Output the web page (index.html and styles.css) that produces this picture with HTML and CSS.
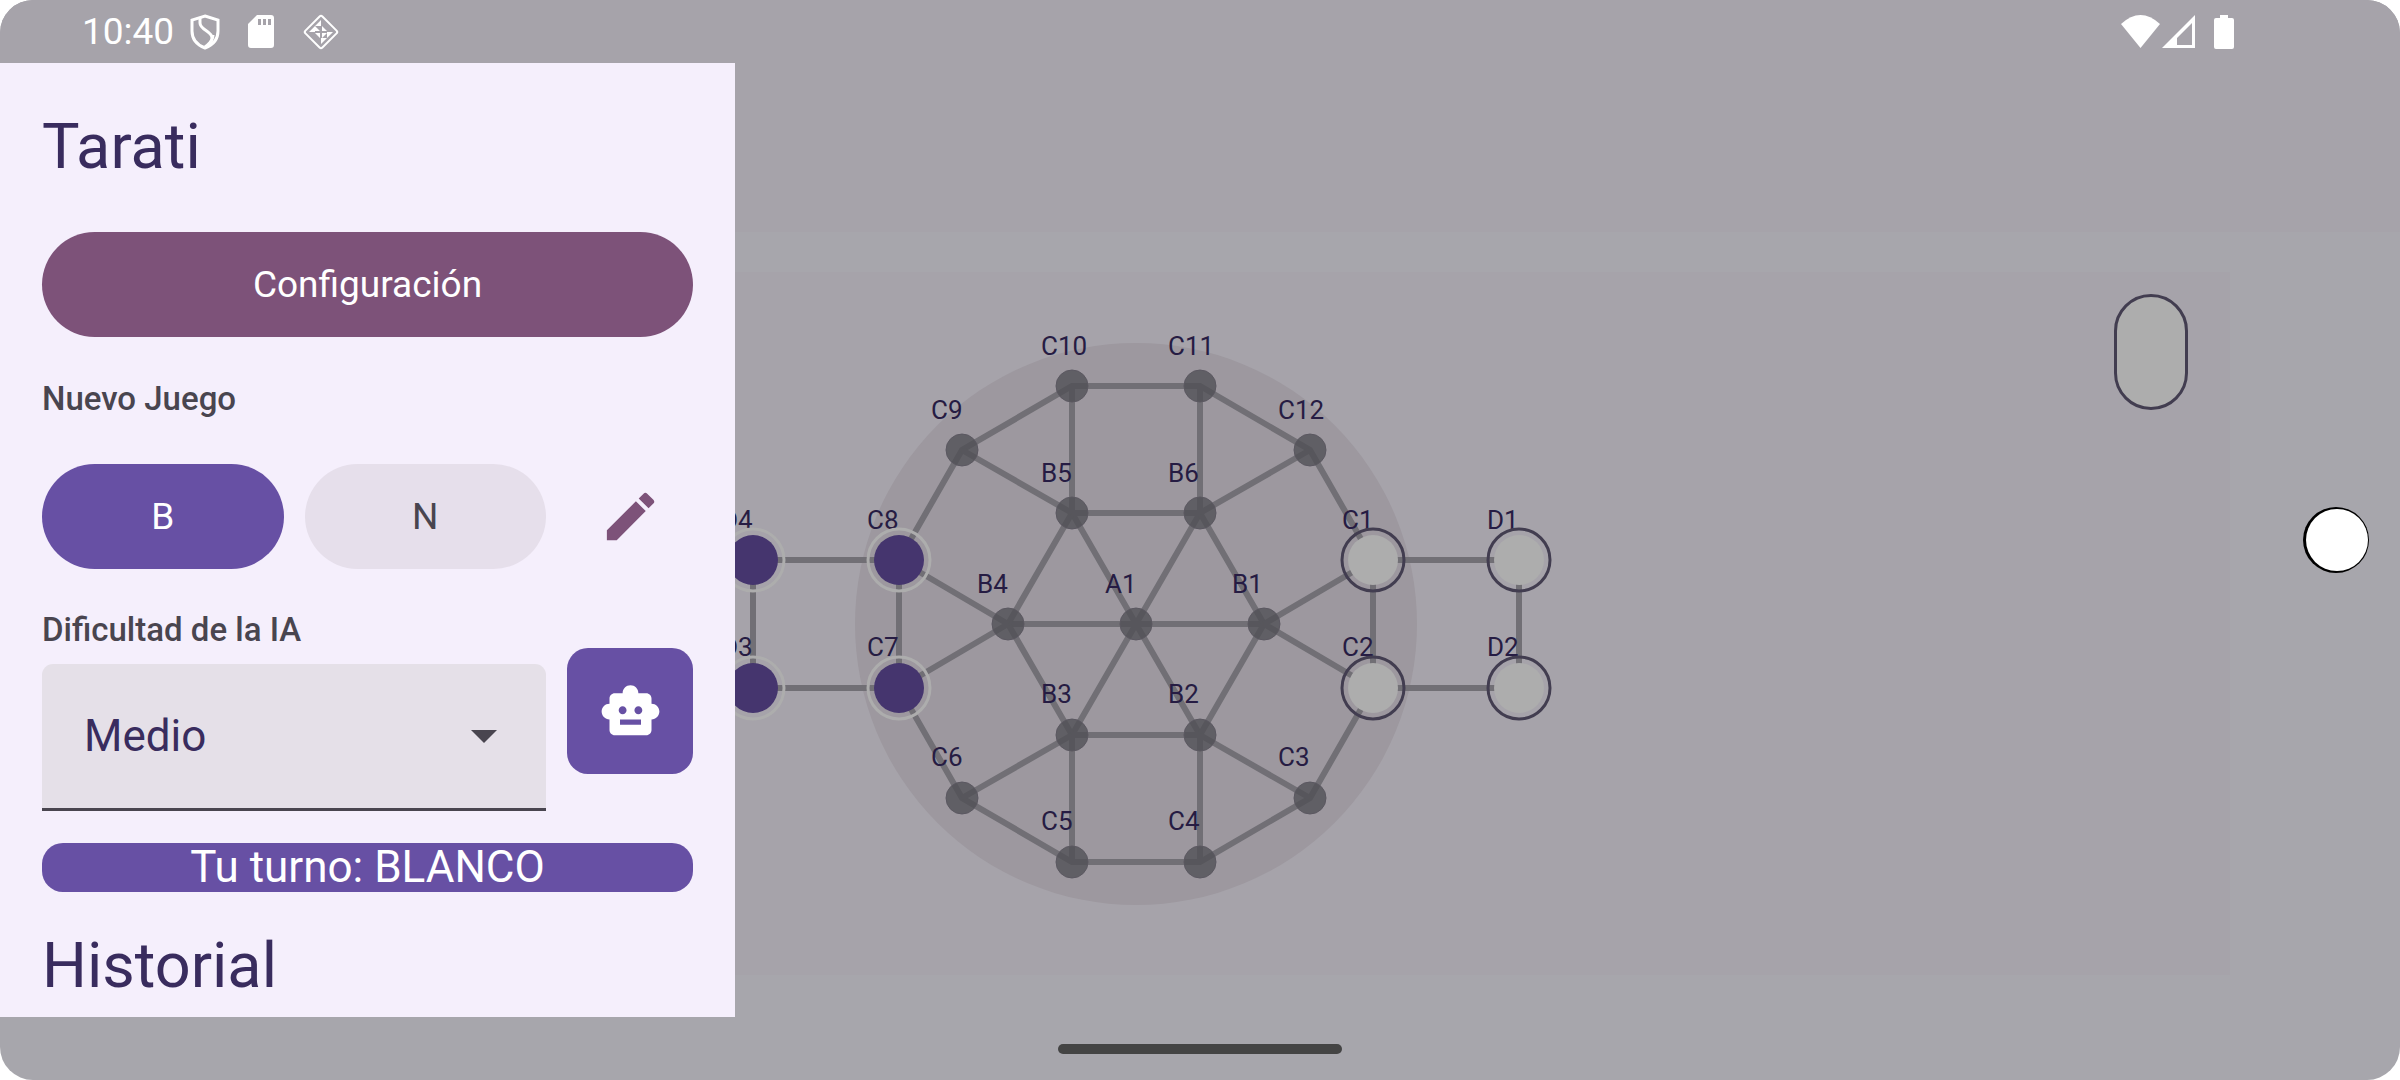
FILE: index.html
```html
<!DOCTYPE html>
<html lang="es">
<head>
<meta charset="utf-8">
<meta name="viewport" content="width=device-width, initial-scale=1">
<title>Tarati</title>
<link rel="stylesheet" href="styles.css">
</head>
<body>
<div class="screen">
  <header class="status-bar">
    <time class="clock">10:40</time>
    <div class="notifications">
      <svg width="30" height="36" viewBox="0 0 30 36" fill="none" stroke="#fff" stroke-width="3">
        <path d="M15 2 28 6V17C28 25 23 31 15 34 7 31 2 25 2 17V6Z"/>
        <path d="M10 4V9C10 16 22 17 22 24 22 27 19 30 15 33M23 21C23 26 21 29 16 33"/>
      </svg>
      <svg width="26" height="34" viewBox="0 0 26 34" fill="#fff">
        <path fill-rule="evenodd" d="M9 0H23Q26 0 26 3V30Q26 33 23 33H3Q0 33 0 30V9ZM10 4V10H13V4ZM15 4V10H18V4ZM20 4V10H23V4Z"/>
      </svg>
      <svg width="38" height="38" viewBox="0 0 38 38" fill="#fff">
        <rect x="7" y="7" width="24" height="24" rx="2" transform="rotate(45 19 19)" fill="none" stroke="#fff" stroke-width="2"/>
        <path d="M19 7V13H13ZM7 19H13V13ZM31 19H25V25ZM19 31V25H25ZM13 13 18 18H13ZM20 13 25 18H20ZM13 20H18V25ZM20 20H25L20 25Z"/>
      </svg>
    </div>
    <div class="system-icons">
      <svg width="39" height="34" viewBox="0 0 39 34" fill="#fff"><path d="M0 9Q19.500-9 39 9L19.500 33Z"/></svg>
      <svg width="33" height="34" viewBox="0 0 33 34" fill="#fff"><path fill-rule="evenodd" d="M33 0V33H0ZM30 8 15 23V30H30Z"/></svg>
      <svg class="battery" width="20" height="34" viewBox="0 0 20 34" fill="#fff"><path d="M6 0H14V3H18Q20 3 20 5V32Q20 34 18 34H2Q0 34 0 32V5Q0 3 2 3H6Z"/></svg>
    </div>
  </header>

  <main class="stage">
    <aside class="drawer">
      <h1 class="title">Tarati</h1>
      <button class="pill pill-settings" type="button">Configuración</button>
      <h2 class="caption">Nuevo Juego</h2>
      <div class="new-game">
        <button class="pill pill-active" type="button">B</button>
        <button class="pill pill-idle" type="button">N</button>
        <button class="edit" type="button" aria-label="Editar">
          <svg width="63" height="63" viewBox="0 0 24 24" fill="#7d5279"><path d="M3 17.25V21h3.75L17.81 9.94l-3.75-3.75zM20.71 7.04a1 1 0 0 0 0-1.41l-2.34-2.34a1 1 0 0 0-1.41 0l-1.83 1.83 3.75 3.75z"/></svg>
        </button>
      </div>
      <div class="ai-row">
        <div class="field">
          <label class="caption" for="level">Dificultad de la IA</label>
          <div class="select-box">
            <select id="level"><option>Fácil</option><option selected>Medio</option><option>Difícil</option></select>
            <svg class="arrow" width="26" height="13" viewBox="0 0 26 13" fill="#49454f"><path d="M0 0H26L13 13Z"/></svg>
          </div>
        </div>
        <button class="robot" type="button" aria-label="IA">
          <svg width="63" height="63" viewBox="0 0 24 24" fill="#fff"><path d="M20 9V7c0-1.100-.9-2-2-2h-3c0-1.660-1.340-3-3-3S9 3.340 9 5H6c-1.100 0-2 .9-2 2v2c-1.660 0-3 1.340-3 3s1.340 3 3 3v4c0 1.100.9 2 2 2h12c1.100 0 2-.9 2-2v-4c1.660 0 3-1.340 3-3s-1.340-3-3-3zM7.500 11.500c0-.83.67-1.500 1.500-1.500s1.500.67 1.500 1.500S9.830 13 9 13s-1.500-.67-1.500-1.500zM16 17H8v-2h8v2zm-1-4c-.83 0-1.500-.67-1.500-1.500S14.170 10 15 10s1.500.67 1.500 1.500S15.830 13 15 13z"/></svg>
        </button>
      </div>
      <p class="turn">Tu turno: BLANCO</p>
      <h2 class="title">Historial</h2>
    </aside>

    <section class="board">
      <svg class="board-map" width="840" height="582" viewBox="720 333 840 582">
        <circle class="disc" cx="1136" cy="624" r="281"/>
        <path class="edges" d="M1136 624 1264 624M1136 624 1200 735M1136 624 1072 735M1136 624 1008 624M1136 624 1072 513M1136 624 1200 513"/>
        <path class="edges" d="M1264 624 1200 735 1072 735 1008 624 1072 513 1200 513Z"/>
        <path class="edges" d="M1373 560V688L1310 798 1200 862H1072L962 798 899 688V560L962 450 1072 386H1200L1310 450Z"/>
        <path class="edges" d="M1264 624 1373 560M1264 624 1373 688M1200 735 1310 798M1200 735V862M1072 735V862M1072 735 962 798M1008 624 899 688M1008 624 899 560M1072 513 962 450M1072 513V386M1200 513V386M1200 513 1310 450"/>
        <path class="edges" d="M1373 560H1519V688H1373M899 560H753V688H899"/>
        <g class="nodes">
          <circle cx="1136" cy="624" r="16"/><circle cx="1264" cy="624" r="16"/><circle cx="1200" cy="735" r="16"/><circle cx="1072" cy="735" r="16"/><circle cx="1008" cy="624" r="16"/><circle cx="1072" cy="513" r="16"/><circle cx="1200" cy="513" r="16"/>
          <circle cx="1310" cy="798" r="16"/><circle cx="1200" cy="862" r="16"/><circle cx="1072" cy="862" r="16"/><circle cx="962" cy="798" r="16"/><circle cx="962" cy="450" r="16"/><circle cx="1072" cy="386" r="16"/><circle cx="1200" cy="386" r="16"/><circle cx="1310" cy="450" r="16"/>
        </g>
        <g class="labels">
          <text x="1105" y="593">A1</text><text x="1232" y="593">B1</text><text x="1168" y="703">B2</text><text x="1041" y="703">B3</text><text x="977" y="593">B4</text><text x="1041" y="482">B5</text><text x="1168" y="482">B6</text>
          <text x="1342" y="529">C1</text><text x="1342" y="656">C2</text><text x="1278" y="766">C3</text><text x="1168" y="830">C4</text><text x="1041" y="830">C5</text><text x="931" y="766">C6</text><text x="867" y="656">C7</text><text x="867" y="529">C8</text><text x="931" y="419">C9</text><text x="1041" y="355">C10</text><text x="1168" y="355">C11</text><text x="1278" y="419">C12</text>
          <text x="1487" y="529">D1</text><text x="1487" y="656">D2</text><text x="721" y="656">D3</text><text x="721" y="529">D4</text>
        </g>
        <g class="white-piece">
          <circle cx="1373" cy="560" r="25"/><circle cx="1373" cy="688" r="25"/><circle cx="1519" cy="560" r="25"/><circle cx="1519" cy="688" r="25"/>
        </g>
        <g class="white-ring">
          <circle cx="1373" cy="560" r="31"/><circle cx="1373" cy="688" r="31"/><circle cx="1519" cy="560" r="31"/><circle cx="1519" cy="688" r="31"/>
        </g>
        <g class="black-piece">
          <circle cx="899" cy="560" r="25"/><circle cx="899" cy="688" r="25"/><circle cx="753" cy="560" r="25"/><circle cx="753" cy="688" r="25"/>
        </g>
        <g class="black-ring">
          <circle cx="899" cy="560" r="31"/><circle cx="899" cy="688" r="31"/><circle cx="753" cy="560" r="31"/><circle cx="753" cy="688" r="31"/>
        </g>
      </svg>
      <div class="turn-indicator"></div>
    </section>

    <div class="camera">
      <svg width="66" height="66" viewBox="0 0 66 66"><circle cx="33" cy="33" r="33"/><circle cx="34" cy="33" r="31" fill="#fff"/></svg>
    </div>
  </main>

  <footer class="nav-bar"><div class="handle"></div></footer>
</div>
</body>
</html>
```
FILE: styles.css
```css
* {
  box-sizing: border-box;
}

body {
  margin: 0;
  background: #fff;
  font-family: Roboto, "Noto Sans", sans-serif;
}

h1, h2, p {
  margin: 0;
  font-weight: 400;
}

button, select {
  border: 0;
  padding: 0;
  font: inherit;
  cursor: pointer;
}

svg {
  display: block;
}

.screen {
  display: flex;
  flex-direction: column;
  min-height: 100vh;
  border-radius: 33px;
  overflow: hidden;
  background: #a7a6ac;
}

.status-bar {
  display: flex;
  align-items: center;
  height: 63px;
  padding: 0 166px 0 82px;
  background: #a6a3aa;
  color: #fff;
}

.clock {
  font-size: 37px;
  line-height: 44px;
}

.notifications {
  display: flex;
  align-items: center;
  gap: 28px;
  margin-left: 16px;
}

.system-icons {
  display: flex;
  align-items: center;
  gap: 2px;
  margin-left: auto;
}

.battery {
  margin-left: 17px;
}

.stage {
  display: flex;
  flex: 1;
  background: linear-gradient(#a6a3aa 169px, #a7a6ac 169px);
}

.drawer {
  flex: none;
  width: 735px;
  padding: 42px 42px 8px;
  background: #f5effc;
  color: #392c5e;
  z-index: 1;
}

.title {
  font-size: 63px;
  line-height: 84px;
}

.pill {
  height: 105px;
  border-radius: 53px;
  font-size: 37px;
  line-height: 53px;
}

.pill-settings {
  width: 100%;
  margin: 43px 0;
  background: #7d5279;
  color: #fff;
}

.caption {
  display: block;
  font-size: 33px;
  font-weight: 500;
  line-height: 38px;
  color: #49454f;
}

.new-game {
  display: grid;
  grid-template-columns: 1fr 1fr 126px;
  gap: 21px;
  margin: 46px 0 42px;
}

.pill-active {
  background: #6750a4;
  color: #fff;
}

.pill-idle {
  background: #e6dfeb;
  color: #49454f;
}

.edit {
  display: grid;
  place-items: center;
  background: none;
}

.ai-row {
  display: flex;
  align-items: center;
  gap: 21px;
}

.field {
  flex: 1;
}

.select-box {
  display: grid;
  align-items: center;
  height: 147px;
  margin-top: 15px;
  border-bottom: 3px solid #49454f;
  border-radius: 11px 11px 0 0;
  background: #e5e0e8;
}

.select-box select {
  grid-area: 1 / 1;
  width: 100%;
  height: 100%;
  padding: 0 42px;
  appearance: none;
  background: none;
  font-size: 44px;
  color: #392c5e;
}

.arrow {
  grid-area: 1 / 1;
  justify-self: end;
  margin-right: 49px;
  pointer-events: none;
}

.robot {
  display: grid;
  place-items: center;
  width: 126px;
  height: 126px;
  border-radius: 21px;
  background: #6750a4;
}

.turn {
  height: 49px;
  margin: 32px 0;
  border-radius: 21px;
  background: #6750a4;
  color: #fff;
  font-size: 44px;
  line-height: 49px;
  text-align: center;
}

.board {
  display: flex;
  flex: 1;
  align-items: flex-start;
  justify-content: space-between;
  margin: 209px 0 42px -15px;
  padding: 22px 42px 0 0;
  background: #a6a3aa;
}

.board-map {
  flex: none;
  margin-top: 39px;
}

.disc {
  fill: #9d989f;
}

.edges {
  fill: none;
  stroke: #716f75;
  stroke-width: 6;
}

.nodes {
  fill: #504f54;
  fill-opacity: 0.78;
  stroke: #5b5861;
}

.labels {
  fill: #261c43;
  font-size: 26px;
}

.white-piece {
  fill: #adadad;
}

.white-ring {
  fill: none;
  stroke: #423d50;
  stroke-width: 3;
}

.black-piece {
  fill: #45356e;
}

.black-ring {
  fill: none;
  stroke: #adadad;
  stroke-width: 3;
}

.turn-indicator {
  width: 74px;
  height: 116px;
  border: 3px solid #423d50;
  border-radius: 37px;
  background: #adadad;
}

.camera {
  display: flex;
  align-items: center;
  flex: none;
  width: 170px;
  padding-left: 73px;
}

.nav-bar {
  display: flex;
  align-items: center;
  justify-content: center;
  height: 63px;
}

.handle {
  width: 284px;
  height: 10px;
  border-radius: 5px;
  background: #444;
}
```
